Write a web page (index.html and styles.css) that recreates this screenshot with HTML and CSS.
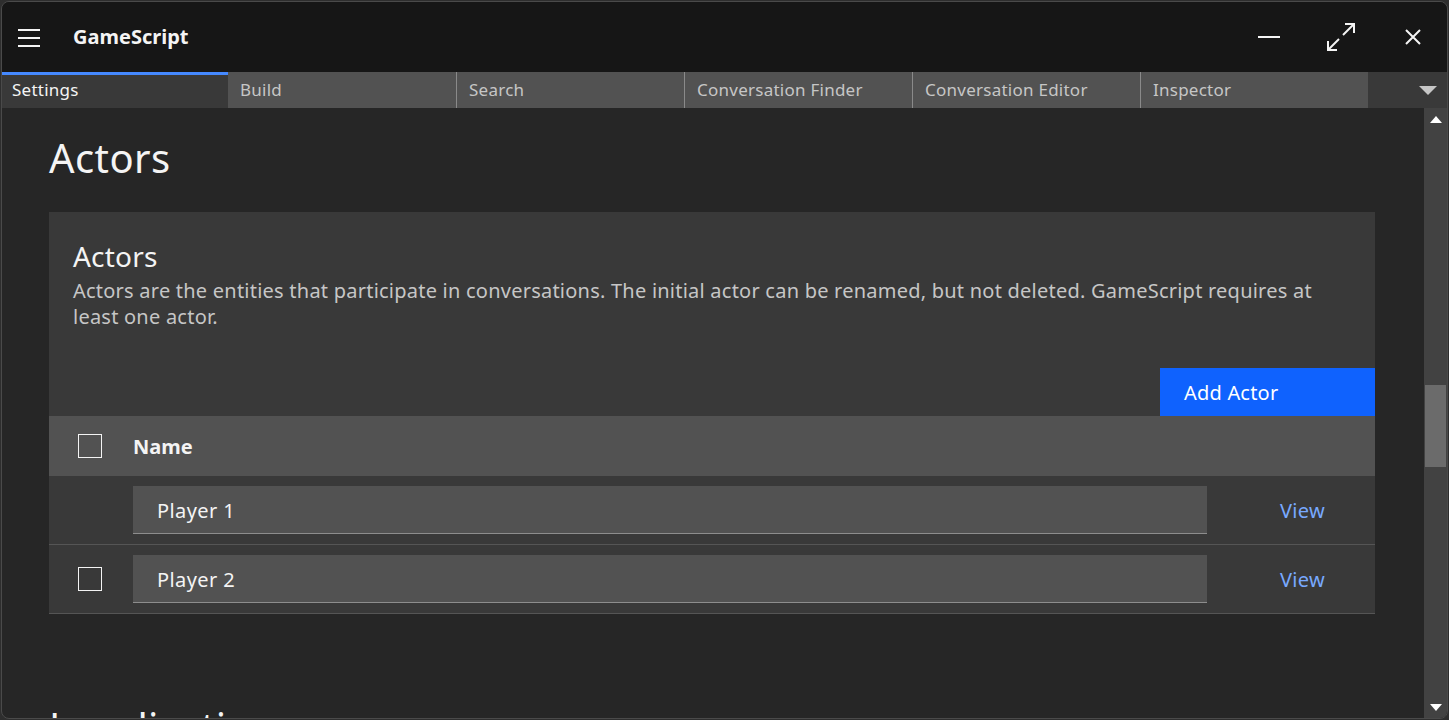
FILE: index.html
```html
<!DOCTYPE html>
<html lang="en">
<head>
<meta charset="utf-8">
<title>GameScript</title>
<link rel="stylesheet" href="styles.css">
</head>
<body>
<div class="window">
  <header class="titlebar">
    <div class="menu-btn">
      <svg width="24" height="20" viewBox="0 0 24 20"><rect x="1" y="1" width="22" height="2" fill="#f4f4f4"/><rect x="1" y="9" width="22" height="2" fill="#f4f4f4"/><rect x="1" y="17" width="22" height="2" fill="#f4f4f4"/></svg>
    </div>
    <div class="app-title">GameScript</div>
    <div class="win-controls">
      <div class="win-btn"><svg width="22" height="2" viewBox="0 0 22 2"><rect width="22" height="2" fill="#f4f4f4"/></svg></div>
      <div class="win-btn"><svg width="30" height="30" viewBox="0 0 30 30" fill="none" stroke="#f4f4f4" stroke-width="2"><path d="M17 13 L28 2"/><path d="M19 2 H28 V11"/><path d="M2 28 L13 17"/><path d="M2 19 V28 H11"/></svg></div>
      <div class="win-btn"><svg width="16" height="16" viewBox="0 0 16 16" stroke="#f4f4f4" stroke-width="2"><path d="M1 1 L15 15 M15 1 L1 15"/></svg></div>
    </div>
  </header>
  <nav class="tabs">
    <div class="tab tab-active">Settings</div>
    <div class="tab tab-first">Build</div>
    <div class="tab">Search</div>
    <div class="tab">Conversation Finder</div>
    <div class="tab">Conversation Editor</div>
    <div class="tab">Inspector</div>
    <div class="tab-more"><span class="tri-down"></span></div>
  </nav>
  <div class="body">
    <main class="content">
      <section class="section">
        <h1 class="page-title">Actors</h1>
        <div class="card">
          <div class="card-head">
            <h2 class="card-title">Actors</h2>
            <p class="card-desc">Actors are the entities that participate in conversations. The initial actor can be renamed, but not deleted. GameScript requires at least one actor.</p>
          </div>
          <div class="toolbar">
            <button class="btn-primary">Add Actor</button>
          </div>
          <div class="table">
            <div class="row row-head">
              <div class="cell-check"><span class="checkbox"></span></div>
              <div class="cell-name">Name</div>
              <div class="cell-action"></div>
            </div>
            <div class="row">
              <div class="cell-check"></div>
              <div class="cell-name"><div class="text-input">Player 1</div></div>
              <div class="cell-action"><a class="link">View</a></div>
            </div>
            <div class="row">
              <div class="cell-check"><span class="checkbox"></span></div>
              <div class="cell-name"><div class="text-input">Player 2</div></div>
              <div class="cell-action"><a class="link">View</a></div>
            </div>
          </div>
        </div>
      </section>
      <section class="section">
        <h1 class="page-title">Localization</h1>
      </section>
    </main>
    <div class="scrollbar">
      <div class="sb-arrow"><span class="tri-up"></span></div>
      <div class="sb-track"><div class="sb-thumb"></div></div>
      <div class="sb-arrow"><span class="tri-down-white"></span></div>
    </div>
  </div>
</div>
</body>
</html>
```

FILE: styles.css
```css
* { box-sizing: border-box; }
html, body { margin: 0; padding: 0; }
body {
  background: #2e2e2e;
  font-family: "Noto Sans", "Open Sans", sans-serif;
  color: #f4f4f4;
  height: 720px;
  overflow: hidden;
}
.window {
  margin: 1px 1px 0 1px;
  height: 718px;
  border: 1px solid #4a4a4a;
  border-radius: 8px;
  overflow: hidden;
  background: #262626;
  display: flex;
  flex-direction: column;
}
.titlebar {
  height: 70px;
  flex: 0 0 70px;
  background: #161616;
  display: flex;
  align-items: center;
}
.menu-btn {
  width: 56px;
  padding-left: 15px;
  display: flex;
  align-items: center;
  margin-top: 1px;
}
.app-title {
  margin-left: 15px;
  font-size: 20px;
  font-weight: 700;
  color: #f4f4f4;
  margin-top: -2px;
}
.win-controls {
  margin-left: auto;
  display: flex;
  gap: 24px;
  padding-right: 10px;
}
.win-btn {
  width: 48px;
  height: 48px;
  display: flex;
  align-items: center;
  justify-content: center;
}
.tabs {
  flex: 0 0 36px;
  height: 36px;
  display: flex;
  background: #393939;
}
.tab {
  width: 228px;
  flex: 0 0 228px;
  background: #525252;
  color: #c6c6c6;
  font-size: 17px;
  letter-spacing: 0.25px;
  padding-left: 12px;
  padding-bottom: 2px;
  border-left: 1px solid #8a8a8a;
  display: flex;
  align-items: center;
  white-space: nowrap;
}
.tab-first { border-left: none; }
.tab-active {
  width: 226px;
  flex: 0 0 226px;
  background: #393939;
  color: #f4f4f4;
  padding-left: 10px;
  border-left: none;
  border-top: 3px solid #4589ff;
  padding-bottom: 4px;
}
.tab-more {
  flex: 1;
  display: flex;
  align-items: center;
  justify-content: flex-end;
  padding-right: 10px;
}
.tri-down {
  width: 0; height: 0;
  border-left: 9px solid transparent;
  border-right: 9px solid transparent;
  border-top: 9px solid #c6c6c6;
}
.body {
  flex: 1;
  display: flex;
  min-height: 0;
}
.content {
  flex: 1;
  overflow: hidden;
  padding: 0 49px 0 47px;
}
.section { padding-top: 26px; margin-bottom: 63px; }
.page-title {
  margin: 0 0 30px 0;
  font-size: 40px;
  line-height: 48px;
  font-weight: 400;
  letter-spacing: 0.4px;
  color: #f4f4f4;
}
.card { background: #393939; }
.card-head { padding: 26px 24px 0 24px; }
.card-title {
  margin: 0;
  font-size: 28px;
  line-height: 36px;
  font-weight: 400;
  letter-spacing: 0.2px;
  color: #f4f4f4;
}
.card-desc {
  margin: 4px 0 0 0;
  font-size: 20px;
  line-height: 26px;
  letter-spacing: 0.23px;
  color: #c6c6c6;
}
.toolbar {
  display: flex;
  justify-content: flex-end;
  margin-top: 38px;
}
.btn-primary {
  width: 215px;
  height: 48px;
  border: none;
  background: #0f62fe;
  color: #ffffff;
  font-family: inherit;
  font-size: 20px;
  letter-spacing: 0.2px;
  text-align: left;
  padding: 0 0 0 24px;
}
.row {
  display: grid;
  grid-template-columns: 84px 1fr 168px;
  align-items: center;
  height: 69px;
  border-bottom: 1px solid #555555;
}
.row-head {
  height: 60px;
  background: #525252;
  border-bottom: none;
  font-weight: 700;
  font-size: 20px;
}
.cell-check { padding-left: 29px; display: flex; align-items: center; }
.checkbox {
  width: 24px;
  height: 24px;
  border: 1px solid #f4f4f4;
  display: block;
}
.cell-name { font-size: 20px; }
.text-input {
  height: 48px;
  background: #525252;
  border-bottom: 1px solid #8d8d8d;
  padding-left: 24px;
  padding-top: 2px;
  display: flex;
  align-items: center;
  letter-spacing: 0.4px;
  color: #f4f4f4;
}
.cell-action { padding-left: 73px; }
.link {
  color: #78a9ff;
  font-size: 20px;
  letter-spacing: 0.3px;
  text-decoration: none;
}
.scrollbar {
  width: 23px;
  flex: 0 0 23px;
  background: #424242;
  display: flex;
  flex-direction: column;
}
.sb-arrow {
  height: 22px;
  display: flex;
  align-items: center;
  justify-content: center;
}
.sb-track { flex: 1; padding-top: 255px; }
.sb-thumb {
  margin-left: 1px;
  width: 21px;
  height: 82px;
  background: #6b6b6b;
}
.tri-up {
  width: 0; height: 0;
  border-left: 6px solid transparent;
  border-right: 6px solid transparent;
  border-bottom: 7px solid #ffffff;
}
.tri-down-white {
  width: 0; height: 0;
  border-left: 6px solid transparent;
  border-right: 6px solid transparent;
  border-top: 7px solid #ffffff;
}
```
